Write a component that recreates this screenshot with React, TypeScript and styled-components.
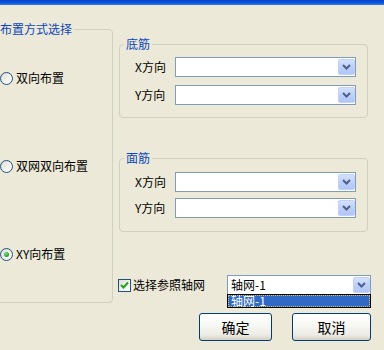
import styled, { createGlobalStyle } from 'styled-components';

const GlobalStyle = createGlobalStyle`
html, body {
  margin: 0;
  padding: 0;
  background: #ece9d8;
}

body {
  font-family: "Noto Sans CJK SC", "Noto Sans", sans-serif;
  font-size: 12px;
  color: #000;
}
`;

const Window = styled.div`
display: flex;
flex-direction: column;
width: 384px;
height: 350px;
overflow: hidden;
background: #ece9d8;
`;

const TitleEdge = styled.div`
flex: none;
height: 5px;
background: linear-gradient(180deg, #0841c6 0%, #0a55e0 60%, #3a7cf0 100%);
`;

const Upper = styled.div`
display: flex;
align-items: flex-start;
flex: none;
`;

const GroupBox = styled.fieldset`
box-sizing: border-box;
min-width: 0;
margin: 0;
padding: 0;
border: 1px solid #d0d0bf;
border-radius: 4px;
`;

const GroupTitle = styled.legend<{ $indent: number }>`
margin-left: ${p => p.$indent}px;
padding: 0 2px;
font-size: 12px;
line-height: 14px;
color: #0a46c0;
`;

const LayoutGroup = styled(GroupBox)`
width: 121px;
height: 281px;
margin: 17px 0 0 -8px;
`;

const RadioList = styled.div`
display: flex;
flex-direction: column;
gap: 74px;
padding: 35px 0 0 7px;
`;

const RadioRow = styled.label`
display: flex;
align-items: center;
gap: 3px;
height: 14px;
line-height: 14px;
white-space: nowrap;
`;

const RadioCircle = styled.span<{ $checked?: boolean }>`
box-sizing: border-box;
display: flex;
align-items: center;
justify-content: center;
flex: none;
width: 13px;
height: 13px;
border: 1px solid #1c5180;
border-radius: 50%;
background: linear-gradient(135deg, #dcdcd4 0%, #f4f4f0 60%, #ffffff 100%);

&::after {
  content: "";
  display: ${p => (p.$checked ? 'block' : 'none')};
  width: 5px;
  height: 5px;
  border-radius: 50%;
  background: radial-gradient(circle at 35% 35%, #7be07a 0%, #2aa52a 60%, #1a861a 100%);
}
`;

const RightColumn = styled.div`
display: flex;
flex-direction: column;
margin: 32px 0 0 6px;
`;

const RebarGroup = styled(GroupBox)<{ $top: number }>`
width: 249px;
height: 81px;
margin-top: ${p => p.$top}px;
`;

const FieldList = styled.div<{ $pad: number; $gap: number }>`
display: flex;
flex-direction: column;
gap: ${p => p.$gap}px;
padding-top: ${p => p.$pad}px;
`;

const FieldRow = styled.div`
display: flex;
align-items: center;
height: 20px;
`;

const FieldLabel = styled.span`
box-sizing: border-box;
width: 55px;
padding-left: 15px;
line-height: 14px;
white-space: nowrap;
`;

const Combo = styled.div<{ $w: number }>`
box-sizing: border-box;
position: relative;
display: flex;
align-items: stretch;
flex: none;
width: ${p => p.$w}px;
height: 20px;
border: 1px solid #7f9db9;
background: #fff;
`;

const ComboText = styled.span`
flex: 1;
padding-left: 3px;
font-size: 12px;
line-height: 18px;
white-space: nowrap;
`;

const ComboButton = styled.span`
box-sizing: border-box;
display: flex;
align-items: center;
justify-content: center;
flex: none;
width: 17px;
margin: 1px 0 1px 0;
border: 1px solid #c0d2fb;
border-radius: 2px;
background: linear-gradient(180deg, #d4e1fd 0%, #bccffa 55%, #b0c6f6 100%);
`;

const RefRow = styled.div`
display: flex;
align-items: center;
align-self: flex-start;
width: 253px;
height: 20px;
margin: 43px 0 0 -1px;
`;

const CheckBox = styled.span`
box-sizing: border-box;
display: flex;
align-items: center;
justify-content: center;
flex: none;
width: 13px;
height: 13px;
border: 1px solid #1c5180;
background: linear-gradient(135deg, #dcdcd4 0%, #f4f4f0 60%, #ffffff 100%);
`;

const CheckLabel = styled.span`
margin-left: 2px;
line-height: 14px;
white-space: nowrap;
`;

const RefCombo = styled(Combo)`
margin-left: auto;
`;

const DropList = styled.div`
box-sizing: border-box;
position: absolute;
top: 100%;
left: -1px;
width: calc(100% + 2px);
height: 14px;
border: 1px solid #000;
background: #fff;
`;

const DropItem = styled.div`
box-sizing: border-box;
height: 12px;
padding-left: 2px;
border: 1px dotted #d8c070;
background: #316ac5;
color: #fff;
font-size: 12px;
line-height: 10px;
white-space: nowrap;
`;

const ButtonRow = styled.div`
display: flex;
justify-content: flex-end;
gap: 20px;
margin-top: 10px;
padding-right: 13px;
`;

const Button = styled.button<{ $w: number }>`
box-sizing: border-box;
width: ${p => p.$w}px;
height: 28px;
padding: 0;
border: 1px solid #003c74;
border-radius: 3px;
background: linear-gradient(180deg, #ffffff 0%, #f7f7f3 45%, #ecebe5 80%, #d6d0c5 100%);
font-family: "Noto Sans CJK SC", "Noto Sans", sans-serif;
font-size: 14px;
line-height: 16px;
color: #000;
`;

const Chevron = () => (
  <svg width="9" height="6" viewBox="0 0 9 6">
    <path d="M1 1 L4.5 4.5 L8 1" fill="none" stroke="#4d6185" strokeWidth="2" />
  </svg>
);

const Tick = () => (
  <svg width="9" height="8" viewBox="0 0 9 8">
    <path d="M1 4 L3.5 6.5 L8 1.5" fill="none" stroke="#21a121" strokeWidth="2" />
  </svg>
);

const DirectionField = ({ label }: { label: string }) => (
  <FieldRow>
    <FieldLabel>{label}</FieldLabel>
    <Combo $w={181}>
      <ComboText />
      <ComboButton><Chevron /></ComboButton>
    </Combo>
  </FieldRow>
);

const layouts = [
  { name: '双向布置', checked: false },
  { name: '双网双向布置', checked: false },
  { name: 'XY向布置', checked: true },
];

export default function App() {
  return (
    <Window>
      <GlobalStyle />
      <TitleEdge />
      <Upper>
        <LayoutGroup>
          <GroupTitle $indent={5}>布置方式选择</GroupTitle>
          <RadioList>
            {layouts.map(l => (
              <RadioRow key={l.name}>
                <RadioCircle $checked={l.checked} />
                {l.name}
              </RadioRow>
            ))}
          </RadioList>
        </LayoutGroup>
        <RightColumn>
          <RebarGroup $top={0}>
            <GroupTitle $indent={4}>底筋</GroupTitle>
            <FieldList $pad={6} $gap={8}>
              <DirectionField label="X方向" />
              <DirectionField label="Y方向" />
            </FieldList>
          </RebarGroup>
          <RebarGroup $top={33}>
            <GroupTitle $indent={4}>面筋</GroupTitle>
            <FieldList $pad={7} $gap={6}>
              <DirectionField label="X方向" />
              <DirectionField label="Y方向" />
            </FieldList>
          </RebarGroup>
          <RefRow>
            <CheckBox><Tick /></CheckBox>
            <CheckLabel>选择参照轴网</CheckLabel>
            <RefCombo $w={144}>
              <ComboText>轴网-1</ComboText>
              <ComboButton><Chevron /></ComboButton>
              <DropList>
                <DropItem>轴网-1</DropItem>
              </DropList>
            </RefCombo>
          </RefRow>
        </RightColumn>
      </Upper>
      <ButtonRow>
        <Button $w={73}>确定</Button>
        <Button $w={79}>取消</Button>
      </ButtonRow>
    </Window>
  );
}
